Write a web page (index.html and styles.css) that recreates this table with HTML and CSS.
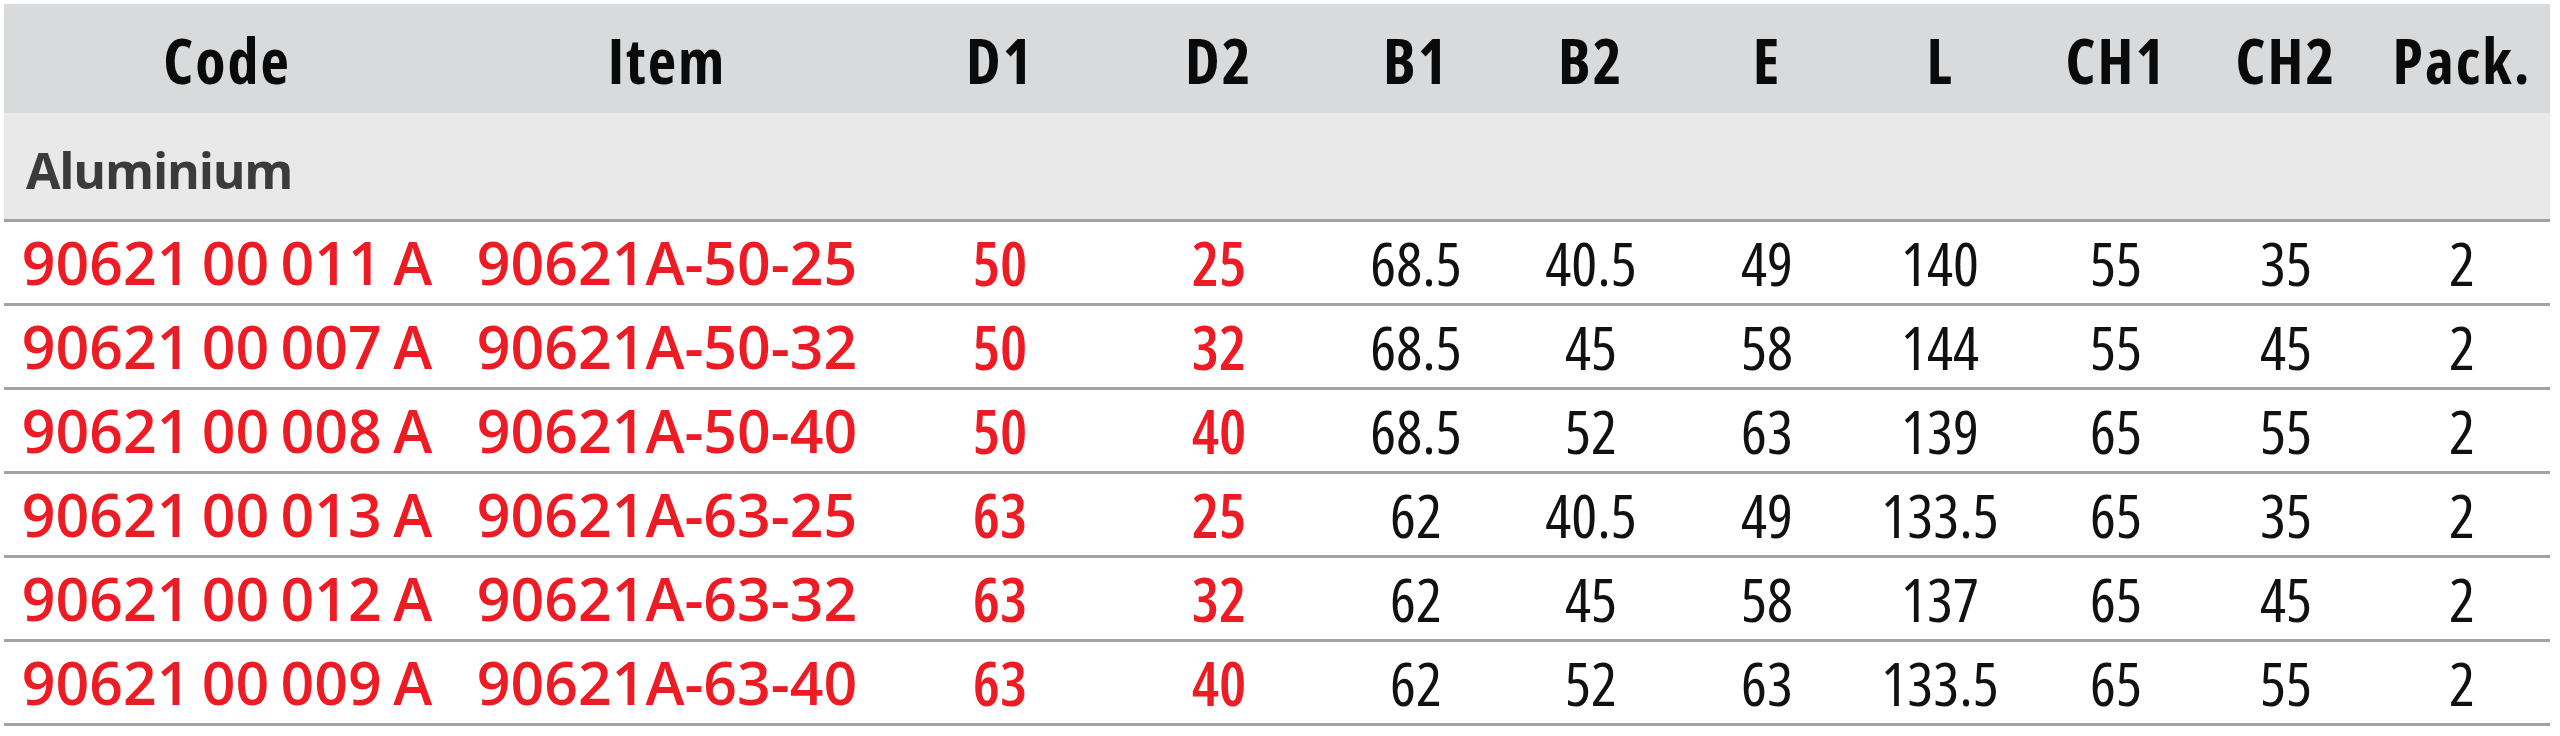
FILE: index.html
```html
<!DOCTYPE html>
<html lang="en">
<head>
<meta charset="utf-8">
<title>90621A aluminium</title>
<link rel="stylesheet" href="styles.css">
</head>
<body>
<div class="table">
  <div class="row head">
    <div class="cell">Code</div>
    <div class="cell">Item</div>
    <div class="cell">D1</div>
    <div class="cell">D2</div>
    <div class="cell">B1</div>
    <div class="cell">B2</div>
    <div class="cell">E</div>
    <div class="cell">L</div>
    <div class="cell">CH1</div>
    <div class="cell">CH2</div>
    <div class="cell last">Pack.</div>
  </div>
  <div class="group">Aluminium</div>

  <div class="row data">
    <div class="cell code">90621 00 011 A</div>
    <div class="cell code">90621A-50-25</div>
    <div class="cell dim">50</div>
    <div class="cell dim">25</div>
    <div class="cell">68.5</div>
    <div class="cell">40.5</div>
    <div class="cell">49</div>
    <div class="cell">140</div>
    <div class="cell">55</div>
    <div class="cell">35</div>
    <div class="cell last">2</div>
  </div>
  <div class="row data">
    <div class="cell code">90621 00 007 A</div>
    <div class="cell code">90621A-50-32</div>
    <div class="cell dim">50</div>
    <div class="cell dim">32</div>
    <div class="cell">68.5</div>
    <div class="cell">45</div>
    <div class="cell">58</div>
    <div class="cell">144</div>
    <div class="cell">55</div>
    <div class="cell">45</div>
    <div class="cell last">2</div>
  </div>
  <div class="row data">
    <div class="cell code">90621 00 008 A</div>
    <div class="cell code">90621A-50-40</div>
    <div class="cell dim">50</div>
    <div class="cell dim">40</div>
    <div class="cell">68.5</div>
    <div class="cell">52</div>
    <div class="cell">63</div>
    <div class="cell">139</div>
    <div class="cell">65</div>
    <div class="cell">55</div>
    <div class="cell last">2</div>
  </div>
  <div class="row data">
    <div class="cell code">90621 00 013 A</div>
    <div class="cell code">90621A-63-25</div>
    <div class="cell dim">63</div>
    <div class="cell dim">25</div>
    <div class="cell">62</div>
    <div class="cell">40.5</div>
    <div class="cell">49</div>
    <div class="cell">133.5</div>
    <div class="cell">65</div>
    <div class="cell">35</div>
    <div class="cell last">2</div>
  </div>
  <div class="row data">
    <div class="cell code">90621 00 012 A</div>
    <div class="cell code">90621A-63-32</div>
    <div class="cell dim">63</div>
    <div class="cell dim">32</div>
    <div class="cell">62</div>
    <div class="cell">45</div>
    <div class="cell">58</div>
    <div class="cell">137</div>
    <div class="cell">65</div>
    <div class="cell">45</div>
    <div class="cell last">2</div>
  </div>
  <div class="row data">
    <div class="cell code">90621 00 009 A</div>
    <div class="cell code">90621A-63-40</div>
    <div class="cell dim">63</div>
    <div class="cell dim">40</div>
    <div class="cell">62</div>
    <div class="cell">52</div>
    <div class="cell">63</div>
    <div class="cell">133.5</div>
    <div class="cell">65</div>
    <div class="cell">55</div>
    <div class="cell last">2</div>
  </div>
</div>
</body>
</html>
```
FILE: styles.css
```css
html, body {
  margin: 0;
  padding: 0;
  background: #ffffff;
}

body {
  font-family: "Open Sans", "Liberation Sans", sans-serif;
  color: #111111;
}

.table {
  width: 2546px;
  margin: 4px 0 0 4px;
}

.row {
  display: grid;
  grid-template-columns: 446px 434px 232px 206px 188px 162px 190px 156px 196px 144px 192px;
  align-items: center;
}

.cell {
  text-align: center;
  white-space: nowrap;
}

.cell.last {
  padding-left: 16px;
}

.head {
  height: 109px;
  padding-top: 2px;
  box-sizing: border-box;
  background: #d9dadb;
  font-size: 62px;
  line-height: 62px;
  font-weight: 700;
  font-stretch: 75%;
  letter-spacing: 2px;
  color: #0a0a0a;
}

.group {
  height: 99px;
  padding: 7px 0 0 22px;
  background: #e9e9e9;
  border-bottom: 3px solid #a2a2a2;
  display: flex;
  align-items: center;
  font-size: 50px;
  line-height: 50px;
  font-weight: 700;
  letter-spacing: -1.2px;
  color: #3b3b3b;
}

.data {
  height: 81px;
  border-bottom: 3px solid #a2a2a2;
  font-size: 61px;
  line-height: 61px;
  font-stretch: 75%;
  color: #111111;
}

.data .code {
  font-size: 59px;
  font-weight: 600;
  font-stretch: 100%;
  word-spacing: -4px;
  color: #ed1c24;
}

.data .dim {
  font-weight: 600;
  color: #ed1c24;
}
```
